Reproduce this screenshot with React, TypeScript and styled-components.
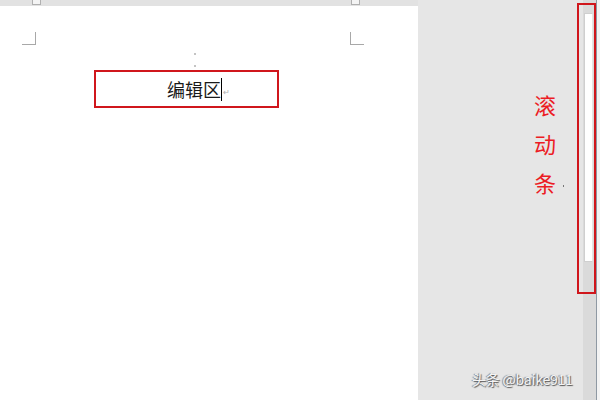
import styled, { createGlobalStyle } from "styled-components";

const GlobalStyle = createGlobalStyle`
    html, body {
        margin: 0;
        padding: 0;
        background: #e6e6e6;
    }
`

const Window = styled.div`
    width: 600px;
    height: 400px;
    display: flex;
    background-color: #e6e6e6;
    position: relative;
    overflow: hidden;
    font-family: "Noto Sans CJK SC", "Noto Sans", sans-serif;
`

const DocColumn = styled.div`
    width: 418px;
    display: flex;
    flex-direction: column;
`

const Ruler = styled.div`
    height: 6px;
    background-color: #e2e2e2;
    display: flex;
    padding-left: 32px;
    gap: 310px;
`

const RulerTick = styled.span`
    width: 7px;
    height: 4px;
    border: 1px solid #b0b0b0;
    border-top: none;
    background: #f4f4f4;
`

const Page = styled.div`
    flex: 1;
    background-color: #ffffff;
    display: flex;
    flex-direction: column;
`

const CornerRow = styled.div`
    margin-top: 26px;
    margin-left: 22px;
    width: 342px;
    display: flex;
    justify-content: space-between;
`

const Corner = styled.span<{ $side: "left" | "right" }>`
    width: 13px;
    height: 12px;
    border-bottom: 1px solid #a8a8a8;
    ${p => p.$side === "left" ? "border-right: 1px solid #a8a8a8;" : "border-left: 1px solid #a8a8a8;"}
`

const Dots = styled.div`
    margin-left: 194px;
    margin-top: 8px;
    display: flex;
    flex-direction: column;
    gap: 10px;
`

const Dot = styled.span`
    width: 2px;
    height: 2px;
    background-color: #c4c4c4;
`

const EditBox = styled.div`
    margin-top: 3px;
    margin-left: 94px;
    width: 181px;
    height: 34px;
    border: 2px solid #d0161c;
    display: flex;
    align-items: center;
    padding-left: 71px;
    box-sizing: content-box;
    width: 110px;
`

const EditText = styled.span`
    font-size: 18px;
    color: #1a1a1a;
    line-height: 24px;
`

const Caret = styled.span`
    width: 1px;
    height: 23px;
    background-color: #000;
    margin-top: 1px;
`

const ReturnMark = styled.span`
    font-size: 8px;
    color: #b0b0b0;
    margin-left: 1px;
    margin-top: 4px;
`

const Gutter = styled.div`
    width: 165px;
    display: flex;
    justify-content: flex-end;
    padding-top: 85px;
    padding-right: 26px;
    box-sizing: border-box;
`

const VerticalLabel = styled.div`
    width: 24px;
    font-size: 22px;
    line-height: 39px;
    color: #ec1c24;
    display: flex;
    flex-direction: column;
    align-items: center;
    height: fit-content;
`

const StrayDot = styled.span`
    position: absolute;
    left: 563px;
    top: 185px;
    width: 1px;
    height: 2px;
    background: #777;
`

const ScrollTrack = styled.div`
    width: 13px;
    background-color: #dadada;
    padding-top: 13px;
    position: relative;
`

const Thumb = styled.div`
    width: 9px;
    height: 249px;
    margin-left: 1px;
    background-color: #ffffff;
    border: 1px solid #cfcfcf;
    border-right-color: #e4e4e4;
    box-sizing: border-box;
`

const EdgeLine = styled.div`
    width: 1px;
    background-color: #8f99a3;
`

const EdgeFill = styled.div`
    flex: 1;
    background-color: #f3f3f3;
`

const Highlight = styled.div`
    position: absolute;
    left: 577px;
    top: 3px;
    width: 15px;
    height: 287px;
    border: 2px solid #d0161c;
`

const Watermark = styled.div`
    position: absolute;
    left: 472px;
    top: 368px;
    font-size: 14px;
    line-height: 22px;
    color: #f4f4f4;
    text-shadow: 1px 1px 1px #555, -1px 0 1px #777;
    white-space: nowrap;
    letter-spacing: -0.2px;
`

const App = () => {
    return <>
        <GlobalStyle />
        <Window>
            <DocColumn>
                <Ruler>
                    <RulerTick />
                    <RulerTick />
                </Ruler>
                <Page>
                    <CornerRow>
                        <Corner $side="left" />
                        <Corner $side="right" />
                    </CornerRow>
                    <Dots>
                        <Dot />
                        <Dot />
                    </Dots>
                    <EditBox>
                        <EditText>编辑区</EditText>
                        <Caret />
                        <ReturnMark>↵</ReturnMark>
                    </EditBox>
                </Page>
            </DocColumn>
            <Gutter>
                <VerticalLabel>
                    <span>滚</span>
                    <span>动</span>
                    <span>条</span>
                </VerticalLabel>
            </Gutter>
            <ScrollTrack>
                <Thumb />
            </ScrollTrack>
            <EdgeLine />
            <EdgeFill />
            <StrayDot />
            <Highlight />
            <Watermark>头条 @baike911</Watermark>
        </Window>
    </>
}

export default App;
